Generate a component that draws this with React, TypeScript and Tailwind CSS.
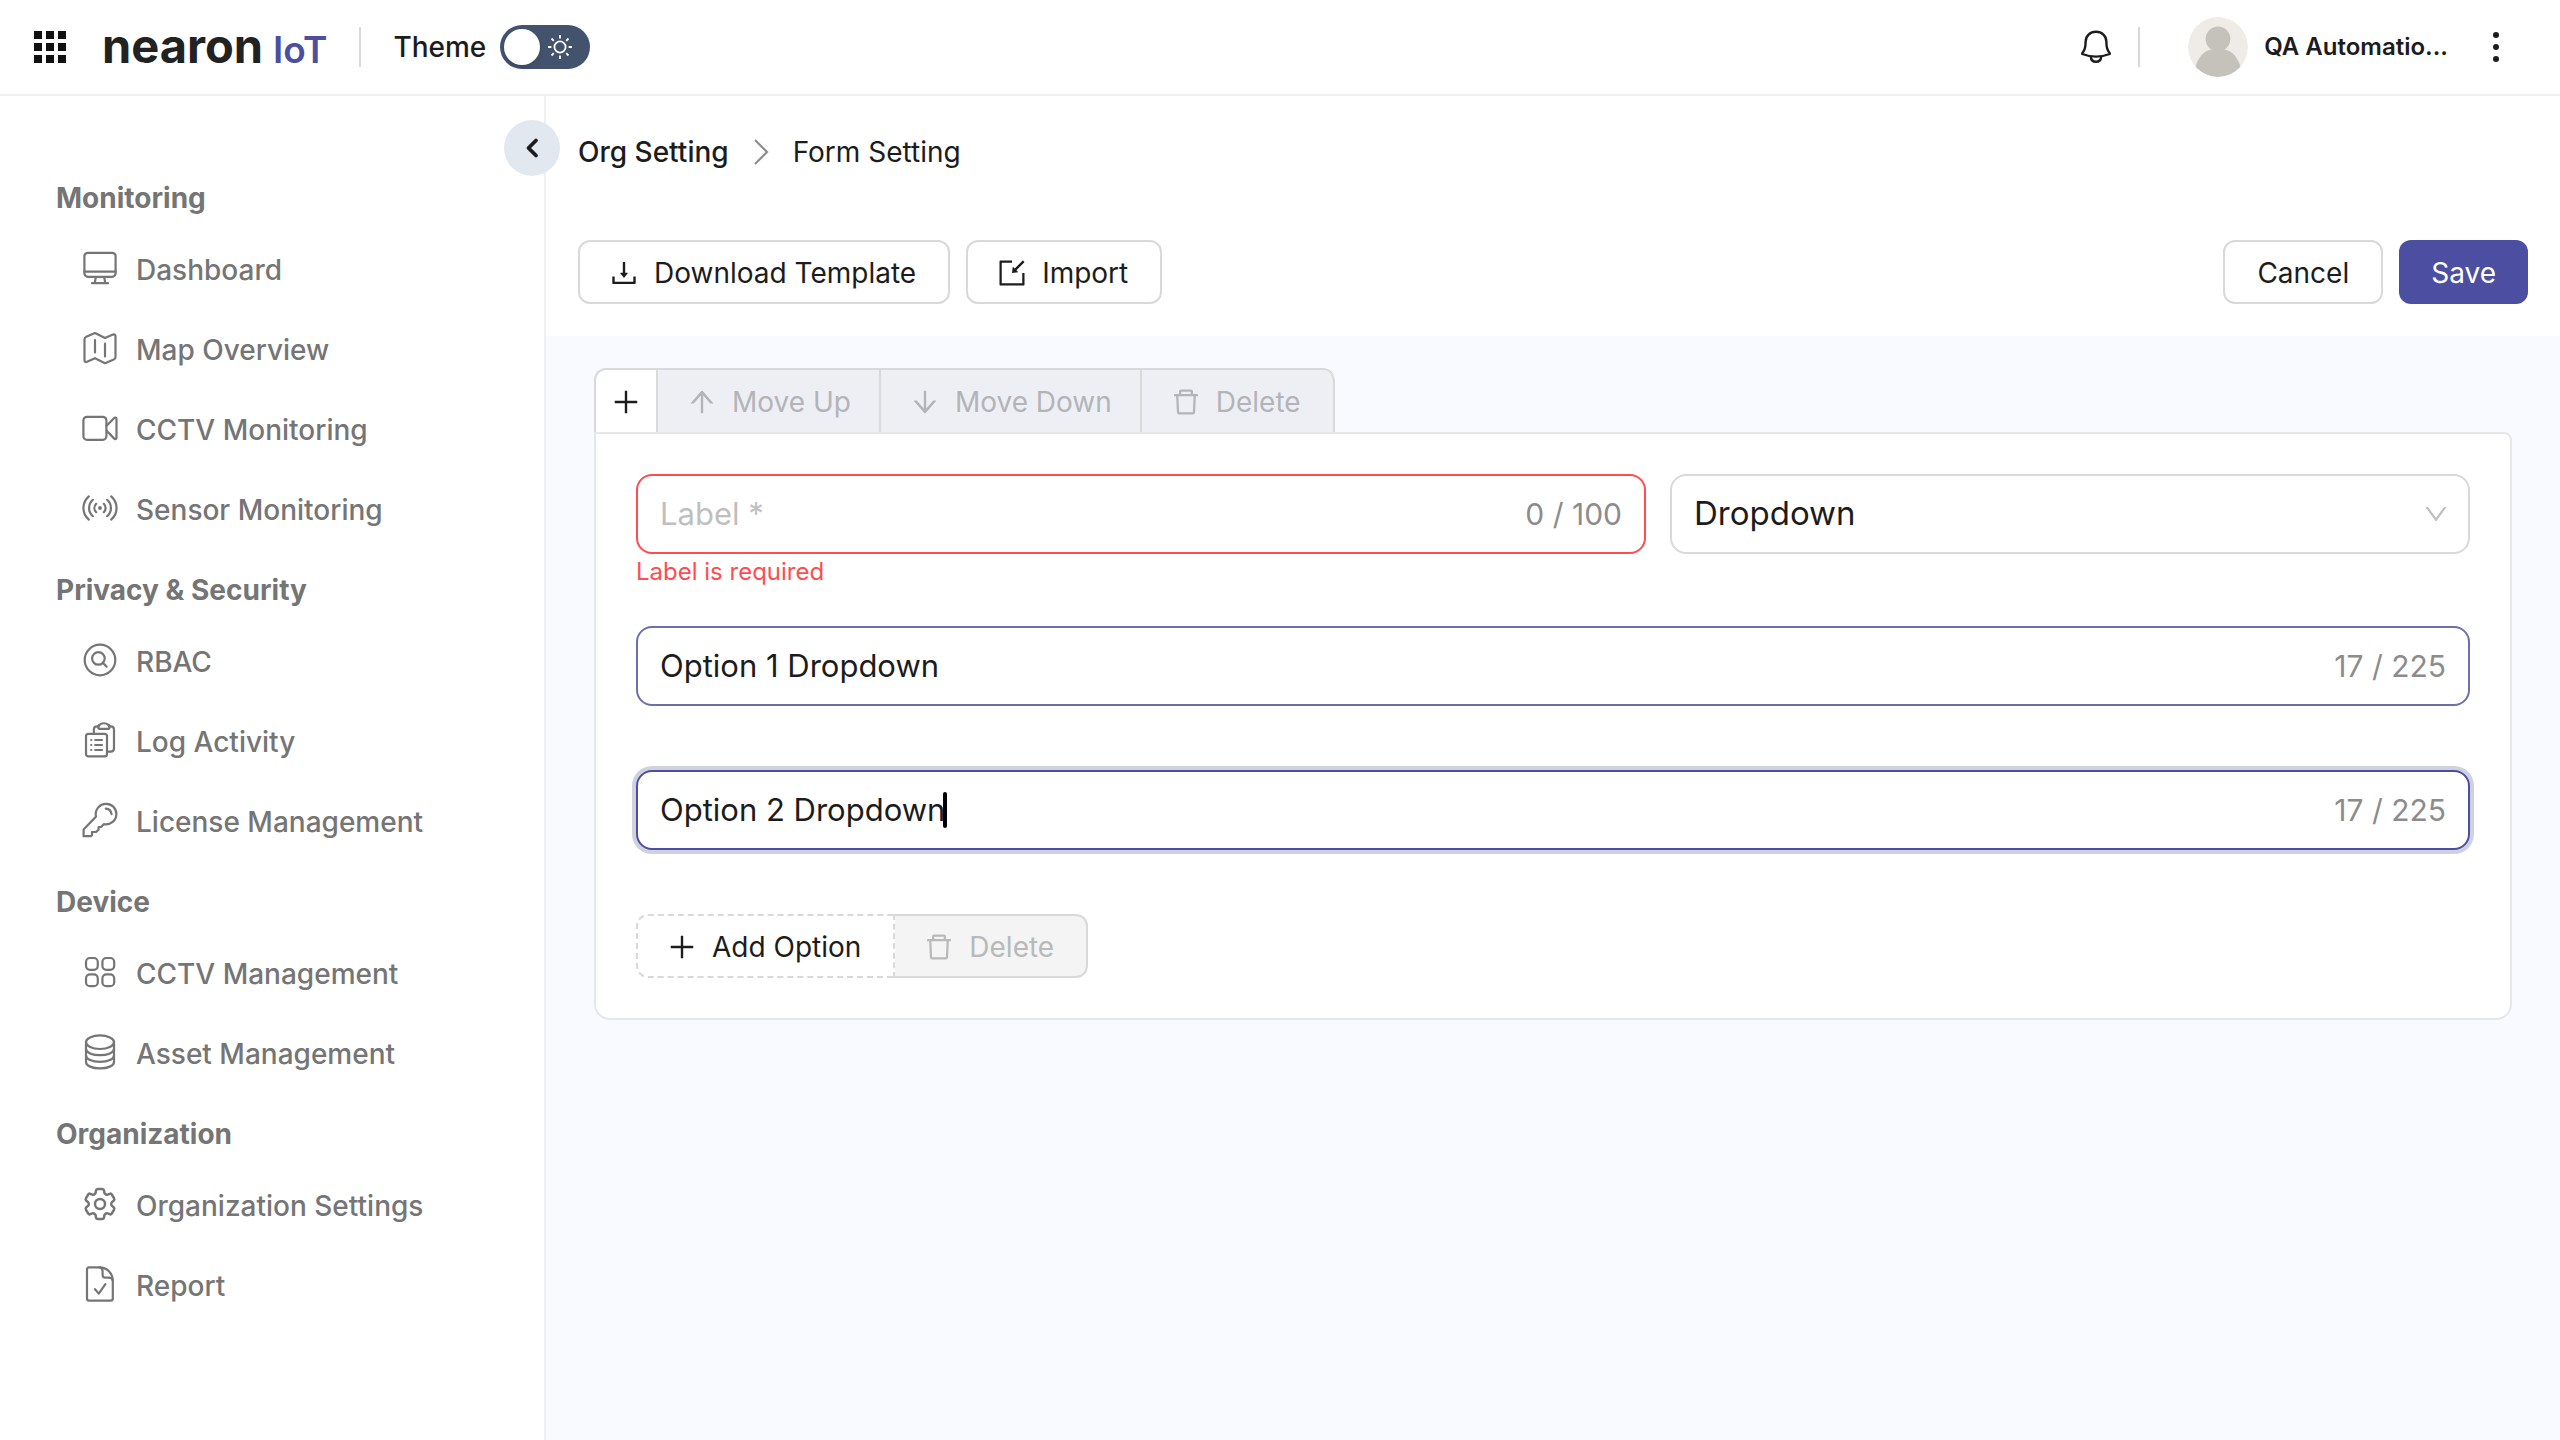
import { useState } from "react";
import type { ReactNode } from "react";
import {
  AiOutlineArrowDown,
  AiOutlineArrowUp,
  AiOutlineDelete,
  AiOutlineDown,
  AiOutlineDownload,
  AiOutlineImport,
  AiOutlinePlus,
} from "react-icons/ai";
import { HiOutlineCog6Tooth } from "react-icons/hi2";

/* ---------- icons ---------- */

function NavIcon({ children }: { children: ReactNode }) {
  return (
    <svg
      viewBox="0 0 36 36"
      className="size-9 shrink-0"
      fill="none"
      stroke="currentColor"
      strokeWidth="2.2"
      strokeLinecap="round"
      strokeLinejoin="round"
      aria-hidden="true"
    >
      {children}
    </svg>
  );
}

const MonitorIcon = () => (
  <NavIcon>
    <rect x="2.4" y="2.8" width="31.2" height="24" rx="3.5" />
    <path d="M2.4 21.6H33.6M14 27L12.6 33M22 27L23.4 33M10 33.2H26" />
  </NavIcon>
);

const MapIcon = () => (
  <NavIcon>
    <path d="M2.5 9.5C2.5 8 3 7.3 4.2 6.8L13 3L23 8L31 4.6C32.6 4 33.5 4.6 33.5 6.2V27C33.5 28.3 33 29 31.8 29.5L23 33.2L13 28.2L5 31.8C3.4 32.5 2.5 31.8 2.5 30.2Z" />
    <path d="M13 10V22.5M23 13.7V26.5" />
  </NavIcon>
);

const VideoIcon = () => (
  <NavIcon>
    <rect x="1.4" y="6.8" width="23" height="23" rx="3.6" />
    <path d="M24.6 15.8L32 8.2C33.2 7 34.5 7.4 34.5 8.8V27.8C34.5 29.2 33.2 29.6 32 28.4L24.6 20.8" />
  </NavIcon>
);

const SensorIcon = () => (
  <NavIcon>
    <circle cx="18" cy="18" r="1.2" fill="currentColor" strokeWidth="1.4" />
    <path d="M14.2 13.8C11.8 16.2 11.8 19.8 14.2 22.2M21.8 13.8C24.2 16.2 24.2 19.8 21.8 22.2" />
    <path d="M10.8 9.8C5.8 14.4 5.8 21.6 10.8 26.2M25.2 9.8C30.2 14.4 30.2 21.6 25.2 26.2" />
    <path d="M6.8 6.4C-0.4 13 -0.4 23 6.8 29.6M29.2 6.4C36.4 13 36.4 23 29.2 29.6" />
  </NavIcon>
);

const RbacIcon = () => (
  <NavIcon>
    <circle cx="18" cy="18" r="15.3" />
    <circle cx="16.4" cy="16.4" r="6.3" />
    <path d="M21 21L24.6 24.6" />
  </NavIcon>
);

const LogIcon = () => (
  <NavIcon>
    <rect x="4" y="11.8" width="21" height="22.6" rx="2.4" />
    <path d="M11.8 11.6V7.6C11.8 5.6 13.2 4.3 15.2 4.3H16.6M27 4.3H28.6C30.8 4.3 32 5.6 32 7.6V26.2C32 28.4 30.8 29.6 28.6 29.6H25.2" />
    <path d="M18 2.6C19.6 .8 24.2 .8 25.8 2.6C28.4 3.4 28 6.9 25.6 6.9H18.2C15.8 6.9 15.4 3.4 18 2.6Z" />
    <path d="M13.2 18H20M13.2 23H20M13.2 28H20M9.2 18H9.3M9.2 23H9.3M9.2 28H9.3" />
  </NavIcon>
);

const KeyIcon = () => (
  <NavIcon>
    <path d="M13.9 14.8C12.6 7.6 17.6 1.8 24.2 1.8C29.8 1.8 34.4 6.2 34.4 12C34.4 18.4 28.6 23.4 21.8 22.2L19 25H16.6V27.6L14 30H10V33.2L8.8 34.2H1.6V27.6Z" />
    <path d="M23.8 6.6C27 6.8 29.2 9 29.6 12.2" />
  </NavIcon>
);

const TilesIcon = () => (
  <NavIcon>
    <rect x="4" y="4" width="11.8" height="11.8" rx="4" />
    <rect x="20.4" y="4" width="11.8" height="11.8" rx="4" />
    <rect x="4" y="20.4" width="11.8" height="11.8" rx="4" />
    <rect x="20.4" y="20.4" width="11.8" height="11.8" rx="4" />
  </NavIcon>
);

const DatabaseIcon = () => (
  <NavIcon>
    <ellipse cx="18" cy="8.2" rx="14" ry="6.8" />
    <path d="M4 8.2V28C4 31.8 10.2 34.4 18 34.4S32 31.8 32 28V8.2" />
    <path d="M4 14.8C4 18.6 10.2 21.2 18 21.2S32 18.6 32 14.8M4 21.4C4 25.2 10.2 27.8 18 27.8S32 25.2 32 21.4" />
  </NavIcon>
);

const SettingsIcon = () => <HiOutlineCog6Tooth className="-mx-0.5 size-10 shrink-0" aria-hidden="true" />;

const ReportIcon = () => (
  <NavIcon>
    <path d="M7 1.4H17.4C25 1.4 30.8 7.2 30.8 15V32.4C30.8 33.8 30 34.6 28.6 34.6H7.2C5.8 34.6 5 33.8 5 32.4V3.6C5 2.2 5.8 1.4 7 1.4Z" />
    <path d="M17.4 1.4C20 1.6 20.6 3.4 20.6 5.4V9C20.6 10.8 21.4 11.6 23.2 11.6H26.4C29 11.6 30.6 12.8 30.8 15" />
    <path d="M13 23.2L16.8 27.6L23.4 18.2" />
  </NavIcon>
);

const AppsIcon = () => (
  <svg viewBox="0 0 32 32" className="size-8" fill="#111" aria-hidden="true">
    {[0, 12, 24].map((y) => [0, 12, 24].map((x) => <rect key={x + "-" + y} x={x} y={y} width="8" height="8" />))}
  </svg>
);

const SunIcon = () => (
  <svg viewBox="0 0 24 24" className="size-6" fill="none" stroke="#fff" strokeWidth="1.8" aria-hidden="true">
    <circle cx="12" cy="12" r="5.6" />
    <path d="M12 0V3.4M12 20.6V24M0 12H3.4M20.6 12H24M3.5 3.5L5.8 5.8M18.2 18.2L20.5 20.5M3.5 20.5L5.8 18.2M18.2 5.8L20.5 3.5" />
  </svg>
);

const BellIcon = () => (
  <svg viewBox="0 0 36 36" className="size-9" fill="none" stroke="#1c1c1c" strokeWidth="2.4" strokeLinejoin="round" aria-hidden="true">
    <path d="M7.6 12.8C7.6 7 12 2.8 18 2.8S28.4 7 28.4 12.8C28.4 17.4 29 20.4 30.6 22.6C31.6 23.8 32 24.6 31.8 25C27 26.8 22.6 27.6 18 27.6S9 26.8 4.2 25C4 24.6 4.4 23.8 5.4 22.6C7 20.4 7.6 17.4 7.6 12.8Z" />
    <path d="M12.8 27.6C13 30.8 15 32.8 18 32.8S23 30.8 23.2 27.6" />
  </svg>
);

const AvatarIcon = () => (
  <svg viewBox="0 0 60 60" className="size-15 rounded-full" aria-hidden="true">
    <circle cx="30" cy="30" r="30" fill="#efece7" />
    <path d="M7.5 49.8C11 38 18 31.5 30 31.5S49 38 52.5 49.8A30 30 0 0 1 7.5 49.8Z" fill="#c5c2bc" />
    <circle cx="30" cy="22" r="12.4" fill="#c5c2bc" />
  </svg>
);

/* ---------- data ---------- */

const sections = [
  {
    title: "Monitoring",
    items: [
      { label: "Dashboard", Icon: MonitorIcon },
      { label: "Map Overview", Icon: MapIcon },
      { label: "CCTV Monitoring", Icon: VideoIcon },
      { label: "Sensor Monitoring", Icon: SensorIcon },
    ],
  },
  {
    title: "Privacy & Security",
    items: [
      { label: "RBAC", Icon: RbacIcon },
      { label: "Log Activity", Icon: LogIcon },
      { label: "License Management", Icon: KeyIcon },
    ],
  },
  {
    title: "Device",
    items: [
      { label: "CCTV Management", Icon: TilesIcon },
      { label: "Asset Management", Icon: DatabaseIcon },
    ],
  },
  {
    title: "Organization",
    items: [
      { label: "Organization Settings", Icon: SettingsIcon },
      { label: "Report", Icon: ReportIcon },
    ],
  },
];

/* ---------- parts ---------- */

function Header() {
  return (
    <header className="flex h-24 shrink-0 items-center border-b-2 border-[#f0f0f0] bg-white pr-12 pl-[34px]">
      <button type="button" aria-label="Applications">
        <AppsIcon />
      </button>
      <a href="#" className="mb-1 ml-9 flex items-baseline gap-2.5 leading-none">
        <span className="text-[47px] font-bold text-[#222]">nearon</span>
        <span className="text-[37px] font-semibold text-[#4c4fa1]">IoT</span>
      </a>
      <span className="ml-8 h-10 w-0.5 bg-[#d9d9d9]" />
      <label htmlFor="theme" className="ml-8 text-[28px] font-medium">
        Theme
      </label>
      <span className="relative ml-3.5 flex h-11 w-[90px] items-center rounded-full bg-[#43536d] p-1">
        <input id="theme" type="checkbox" role="switch" className="absolute inset-0 cursor-pointer appearance-none rounded-full" />
        <span className="pointer-events-none mr-2 size-9 rounded-full bg-white shadow-md" />
        <SunIcon />
      </span>
      <div className="ml-auto flex items-center">
        <button type="button" aria-label="Notifications">
          <BellIcon />
        </button>
        <span className="ml-6 h-10 w-0.5 bg-[#d9d9d9]" />
        <span className="ml-12">
          <AvatarIcon />
        </span>
        <span className="ml-4 text-2xl font-semibold">QA Automatio...</span>
        <button type="button" aria-label="More" className="ml-8">
          <svg viewBox="0 0 32 32" className="size-8" fill="#1c1c1c" aria-hidden="true">
            <circle cx="16" cy="4" r="3" />
            <circle cx="16" cy="16" r="3" />
            <circle cx="16" cy="28" r="3" />
          </svg>
        </button>
      </div>
    </header>
  );
}

function Sidebar() {
  return (
    <aside className="relative w-[546px] shrink-0 border-r-2 border-[#f0f0f0] bg-white pt-[70px] text-[28px] text-[#757575]">
      <nav className="flex flex-col gap-2">
        {sections.map((s) => (
          <section key={s.title}>
            <h2 className="flex h-16 items-center pl-14 font-bold">{s.title}</h2>
            <ul>
              {s.items.map(({ label, Icon }) => (
                <li key={label}>
                  <a href="#" className="flex h-20 items-center gap-[18px] pl-[82px] font-medium">
                    <span className="mb-1">
                      <Icon />
                    </span>
                    {label}
                  </a>
                </li>
              ))}
            </ul>
          </section>
        ))}
      </nav>
      <button
        type="button"
        aria-label="Collapse menu"
        className="absolute top-6 -right-4 flex size-14 items-center justify-center rounded-full bg-[#e2e8f0]"
      >
        <svg viewBox="0 0 24 24" className="size-6" fill="none" stroke="#1c1c1c" strokeWidth="3.8" strokeLinecap="round" strokeLinejoin="round" aria-hidden="true">
          <path d="M16 4.5L8.5 12L16 19.5" />
        </svg>
      </button>
    </aside>
  );
}

function Button({ icon, children }: { icon?: ReactNode; children: ReactNode }) {
  return (
    <button
      type="button"
      className={
        icon
          ? "flex h-16 items-center gap-3.5 rounded-xl border-2 border-[#d9d9d9] bg-white pt-0.5 pr-8 pl-7"
          : "flex h-16 items-center rounded-xl border-2 border-[#d9d9d9] bg-white px-8 pt-0.5"
      }
    >
      {icon}
      {children}
    </button>
  );
}

function Tab({ icon, children }: { icon: ReactNode; children: ReactNode }) {
  return (
    <button
      type="button"
      disabled
      className="flex h-full items-center gap-3.5 border-r-2 border-[#d9d9d9] bg-[#eeeff5] pt-0.5 pr-7 pl-7 text-[#b3b4b8] last:rounded-tr-xl last:pr-8"
    >
      {icon}
      {children}
    </button>
  );
}

function OptionField({ id, initial, focused }: { id: string; initial: string; focused?: boolean }) {
  const [value, setValue] = useState(initial);
  return (
    <div
      className={
        focused
          ? "flex h-20 items-center rounded-2xl border-2 border-[#4c4fa1] bg-white px-[22px] ring-4 ring-[#cfd1df]"
          : "flex h-20 items-center rounded-2xl border-2 border-[#6b70ad] bg-white px-[22px]"
      }
    >
      <input
        id={id}
        aria-label={id}
        value={value}
        onChange={(e) => setValue(e.target.value)}
        className={
          focused
            ? "field-sizing-content bg-transparent text-[31px] caret-transparent outline-none"
            : "min-w-0 flex-1 bg-transparent text-[31px] outline-none"
        }
      />
      {focused && <span className="-ml-0.5 h-9 w-1 rounded-sm bg-black" />}
      <span className="ml-auto text-[30px] text-[#8c8c8c]">{value.length} / 225</span>
    </div>
  );
}

function FieldCard() {
  return (
    <div>
      <div className="flex h-16 w-fit rounded-t-xl border-2 border-r-0 border-b-0 border-[#d9d9d9]">
        <button type="button" aria-label="Add field" className="flex items-center rounded-tl-xl border-r-2 border-[#d9d9d9] bg-white px-3.5 pt-0.5">
          <AiOutlinePlus className="size-8" />
        </button>
        <Tab icon={<AiOutlineArrowUp className="size-8" />}>Move Up</Tab>
        <Tab icon={<AiOutlineArrowDown className="size-8" />}>Move Down</Tab>
        <Tab icon={<AiOutlineDelete className="size-8" />}>Delete</Tab>
      </div>
      <div className="rounded-2xl rounded-tl-none rounded-tr-lg border-2 border-[#e5e7eb] bg-white p-10">
        <div className="grid grid-cols-[101fr_80fr] gap-6">
          <div className="h-[152px]">
            <div className="flex h-20 items-center rounded-2xl border-2 border-[#ff4d4f] px-[22px]">
              <input
                aria-label="Label"
                aria-invalid="true"
                placeholder="Label *"
                className="min-w-0 flex-1 bg-transparent text-[31px] outline-none placeholder:text-[#bfbfbf]"
              />
              <span className="text-[30px] text-[#8c8c8c]">0 / 100</span>
            </div>
            <p className="text-2xl leading-9 text-[#ff4d4f]">Label is required</p>
          </div>
          <div className="relative h-20">
            <select
              aria-label="Field type"
              defaultValue="Dropdown"
              className="size-full appearance-none rounded-2xl border-2 border-[#d9d9d9] bg-white px-[22px] text-[33px]"
            >
              <option>Dropdown</option>
            </select>
            <AiOutlineDown className="pointer-events-none absolute top-6.5 right-5 size-7 text-[#bfbfbf]" />
          </div>
        </div>
        <div className="flex flex-col gap-16">
          <OptionField id="Option 1" initial="Option 1 Dropdown" />
          <OptionField id="Option 2" initial="Option 2 Dropdown" focused />
          <div className="flex">
            <button
              type="button"
              className="flex h-16 items-center gap-3.5 rounded-l-xl border-2 border-dashed border-[#d9d9d9] bg-white pt-0.5 pr-8 pl-7"
            >
              <AiOutlinePlus className="size-8" />
              Add Option
            </button>
            <button
              type="button"
              disabled
              className="flex h-16 items-center gap-3.5 rounded-r-xl border-2 border-l-0 border-[#d9d9d9] bg-[#f4f4f4] pt-0.5 pr-8 pl-7 text-[#b9b9b9]"
            >
              <AiOutlineDelete className="size-8" />
              Delete
            </button>
          </div>
        </div>
      </div>
    </div>
  );
}

export default function App() {
  return (
    <div className="flex min-h-screen flex-col bg-white font-['Inter',sans-serif] text-[28px] text-[#1c1c1c]">
      <Header />
      <div className="flex flex-1">
        <Sidebar />
        <main className="flex-1 bg-[#f8faff]">
          <div className="bg-white p-8">
            <nav aria-label="Breadcrumb" className="flex h-12 items-center gap-6">
              <a href="#" className="font-medium">
                Org Setting
              </a>
              <svg viewBox="0 0 16 28" className="h-7 w-4" fill="none" stroke="#8c8c8c" strokeWidth="2.2" aria-hidden="true">
                <path d="M2 2L14 14L2 26" />
              </svg>
              <span>Form Setting</span>
            </nav>
            <div className="mt-16 flex gap-4">
              <Button icon={<AiOutlineDownload className="size-8" />}>Download Template</Button>
              <Button icon={<AiOutlineImport className="size-8" />}>Import</Button>
              <div className="ml-auto flex gap-4">
                <Button>Cancel</Button>
                <button type="button" className="h-16 rounded-xl bg-[#4c4fa1] px-8 pt-0.5 text-white">
                  Save
                </button>
              </div>
            </div>
          </div>
          <div className="px-12 py-8">
            <FieldCard />
          </div>
        </main>
      </div>
    </div>
  );
}
